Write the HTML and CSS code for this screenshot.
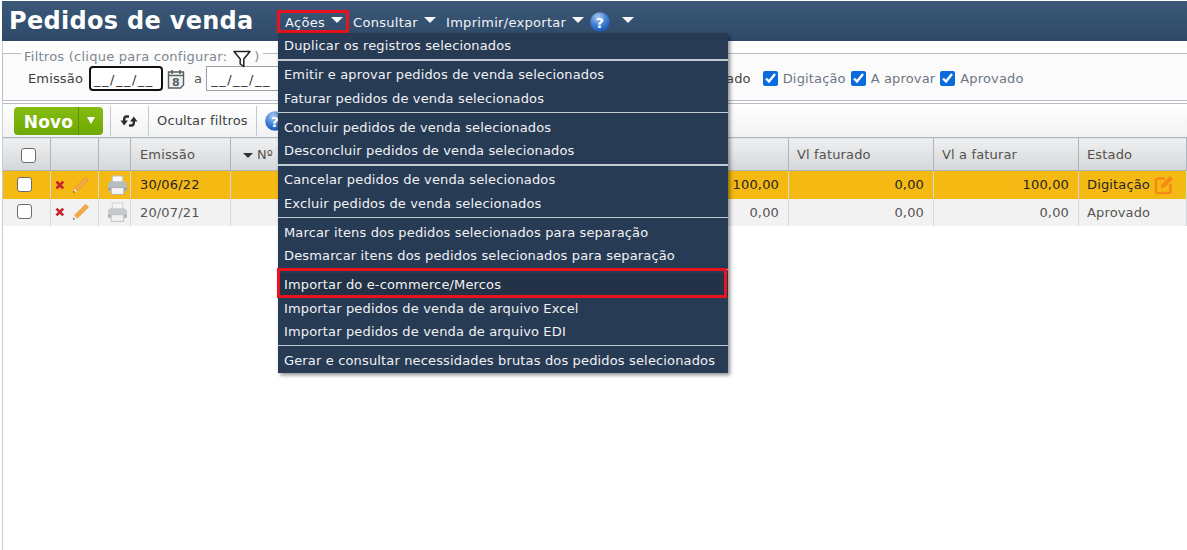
FILE: index.html
```html
<!DOCTYPE html>
<html lang="pt-BR">
<head>
<meta charset="utf-8">
<title>Pedidos de venda</title>
<link rel="stylesheet" href="styles.css">
</head>
<body>
<div class="page">
  <header class="top">
    <h1 class="title">Pedidos de venda</h1>
    <nav class="bar">
      <span class="bar-item bar-active">Ações<i class="tri"></i></span>
      <span class="bar-item bar-c">Consultar<i class="tri"></i></span>
      <span class="bar-item bar-i">Imprimir/exportar<i class="tri"></i></span>
      <svg class="help" viewBox="0 0 20 20"><defs><radialGradient id="hb" cx="40%" cy="25%" r="80%"><stop offset="0" stop-color="#a9c8ee"/><stop offset=".55" stop-color="#3f7fd4"/><stop offset="1" stop-color="#1650b0"/></radialGradient></defs><circle cx="10" cy="10" r="9.8" fill="url(#hb)"/><text x="10" y="15.500" text-anchor="middle" class="help-q">?</text></svg>
      <i class="tri tri-last"></i>
    </nav>
  </header>

  <fieldset class="filters">
    <legend class="legend">Filtros (clique para configurar:<svg class="funnel" viewBox="0 0 18 18"><path d="M1 1.500h16l-6.200 7.500v7.500L7.200 14V9z" fill="#fff" stroke="#222" stroke-width="1.500" stroke-linejoin="round"/></svg>)</legend>
    <div class="filter-row">
      <label class="lbl">Emissão</label>
      <span class="date date-focus">__/__/__</span>
      <svg class="cal" viewBox="0 0 18 20"><path d="M1.500 3h15v13l-3 3h-12z" fill="#eef0f1" stroke="#55605f" stroke-width="1.400"/><path d="M1.500 6.500h15" stroke="#55605f" stroke-width="1.400"/><path d="M5 1v4M13 1v4" stroke="#55605f" stroke-width="1.600"/><text x="9" y="16.500" text-anchor="middle" class="cal-n">8</text></svg>
      <span class="lbl lbl-a">a</span>
      <span class="date date-to">__/__/__</span>
      <div class="states">
        <span class="lbl-s">Cancelado</span>
        <label class="state"><input type="checkbox" checked>Digitação</label>
        <label class="state"><input type="checkbox" checked>A aprovar</label>
        <label class="state"><input type="checkbox" checked>Aprovado</label>
      </div>
    </div>
  </fieldset>

  <div class="toolbar">
    <div class="novo"><span class="novo-main">Novo</span><span class="novo-arrow"><i></i></span></div>
    <div class="tool tool-icon"><svg class="sync" viewBox="0 0 18 14"><path d="M9 2.500H6.500C5 2.500 4.200 3.500 4.200 5.500V7" fill="none" stroke="#2e2e2e" stroke-width="2.400"/><path d="M0.500 6.500h7.400L4.200 11.500z" fill="#2e2e2e"/><path d="M9 11.500h2.500c1.500 0 2.300-1 2.300-3V7" fill="none" stroke="#2e2e2e" stroke-width="2.400"/><path d="M10 7.500h7.500L13.800 2.500z" fill="#2e2e2e"/></svg></div>
    <div class="tool tool-text">Ocultar filtros</div>
    <div class="tool tool-help"><svg class="help" viewBox="0 0 20 20"><circle cx="10" cy="10" r="9.800" fill="url(#hb)"/><text x="10" y="15.500" text-anchor="middle" class="help-q">?</text></svg></div>
  </div>

  <table class="grid">
    <colgroup>
      <col class="c-check"><col class="c-act"><col class="c-print"><col class="c-date"><col class="c-num"><col class="c-val"><col class="c-val2"><col class="c-val2"><col>
    </colgroup>
    <thead>
      <tr>
        <th class="center"><input type="checkbox" class="cb cb-head"></th>
        <th></th>
        <th></th>
        <th class="cell-date">Emissão</th>
        <th><i class="sort"></i>Nº</th>
        <th></th>
        <th>Vl faturado</th>
        <th>Vl a faturar</th>
        <th>Estado</th>
      </tr>
    </thead>
    <tbody>
      <tr class="row-sel">
        <td class="center"><input type="checkbox" class="cb"></td>
        <td><div class="acts"><svg class="x" viewBox="0 0 10 10"><path d="M1.500 1.500l7 7M8.500 1.500l-7 7" stroke="#c4232b" stroke-width="2.800"/></svg><svg class="pen" viewBox="0 0 18 18"><path d="M14 1l3 3L5.500 15.500l-3-3z" fill="#f2a94a" stroke="#dd8c22" stroke-width=".6"/><path d="M2.500 12.500l3 3-4.500 1.500z" fill="#f7e2bf"/><path d="M1 17l.6-2 1.400 1.400z" fill="#333"/></svg></div></td>
        <td class="center"><svg class="printer" viewBox="0 0 20 19"><path d="M5 1h10v6H5z" fill="#fafafa" stroke="#c2c5c7"/><path d="M3 6h14l2 2v6a1.500 1.500 0 0 1-1.500 1.500h-15A1.500 1.500 0 0 1 1 14V8z" fill="#b9bdc0"/><path d="M1 12h18v2.500H1z" fill="#9ea3a6"/><path d="M4 12h12v6.500H4z" fill="#f5f5f5" stroke="#aaaeb1" stroke-width=".8"/></svg></td>
        <td class="cell-date">30/06/22</td>
        <td></td>
        <td class="num">100,00</td>
        <td class="num">0,00</td>
        <td class="num">100,00</td>
        <td><div class="st">Digitação<svg class="edit" viewBox="0 0 20 20"><path d="M11 3.500H4a2 2 0 0 0-2 2V16a2 2 0 0 0 2 2h10.500a2 2 0 0 0 2-2V9" fill="none" stroke="#f58a14" stroke-width="2.600"/><path d="M16 1l3 3-8.500 8.500-4 1 1-4z" fill="#f58a14"/></svg></div></td>
      </tr>
      <tr class="row-alt">
        <td class="center"><input type="checkbox" class="cb"></td>
        <td><div class="acts"><svg class="x" viewBox="0 0 10 10"><path d="M1.500 1.500l7 7M8.500 1.500l-7 7" stroke="#c4232b" stroke-width="2.800"/></svg><svg class="pen" viewBox="0 0 18 18"><path d="M14 1l3 3L5.500 15.500l-3-3z" fill="#f2a94a" stroke="#dd8c22" stroke-width=".6"/><path d="M2.500 12.500l3 3-4.500 1.500z" fill="#f7e2bf"/><path d="M1 17l.6-2 1.400 1.400z" fill="#333"/></svg></div></td>
        <td class="center"><svg class="printer" viewBox="0 0 20 19"><path d="M5 1h10v6H5z" fill="#f5f5f5" stroke="#cfd2d4"/><path d="M3 6h14l2 2v6a1.500 1.500 0 0 1-1.500 1.500h-15A1.500 1.500 0 0 1 1 14V8z" fill="#c6cacd"/><path d="M1 12h18v2.500H1z" fill="#aeb3b6"/><path d="M4 12h12v6.500H4z" fill="#f0f0f0" stroke="#b9bdc0" stroke-width=".8"/></svg></td>
        <td class="cell-date">20/07/21</td>
        <td></td>
        <td class="num">0,00</td>
        <td class="num">0,00</td>
        <td class="num">0,00</td>
        <td>Aprovado</td>
      </tr>
    </tbody>
  </table>

  <ul class="menu">
    <li>Duplicar os registros selecionados</li>
    <li class="sep sep-thick"></li>
    <li>Emitir e aprovar pedidos de venda selecionados</li>
    <li>Faturar pedidos de venda selecionados</li>
    <li class="sep"></li>
    <li>Concluir pedidos de venda selecionados</li>
    <li>Desconcluir pedidos de venda selecionados</li>
    <li class="sep sep-thick"></li>
    <li>Cancelar pedidos de venda selecionados</li>
    <li>Excluir pedidos de venda selecionados</li>
    <li class="sep"></li>
    <li>Marcar itens dos pedidos selecionados para separação</li>
    <li>Desmarcar itens dos pedidos selecionados para separação</li>
    <li class="sep"></li>
    <li class="hot">Importar do e-commerce/Mercos</li>
    <li>Importar pedidos de venda de arquivo Excel</li>
    <li>Importar pedidos de venda de arquivo EDI</li>
    <li class="sep"></li>
    <li>Gerar e consultar necessidades brutas dos pedidos selecionados</li>
  </ul>
</div>
</body>
</html>
```
FILE: styles.css
```css
* { box-sizing: border-box; }
html, body { margin: 0; padding: 0; background: #fff; }
body { font-family: "DejaVu Sans", Verdana, sans-serif; font-size: 13px; letter-spacing: .15px; color: #4a4a4a; overflow: hidden; }
.page { position: relative; width: 1187px; height: 550px; padding: 1px 0 0 2px; overflow: hidden; }
.page::before { content: ""; position: absolute; left: 2px; top: 41px; bottom: 0; width: 1px; background: #c9ced3; }

/* header */
.top { display: flex; align-items: flex-start; height: 40px; background: linear-gradient(#3b5878, #2f4a68); }
.title { margin: 5px 0 0 7px; width: 269px; font-size: 24px; line-height: 30px; font-weight: 700; letter-spacing: .3px; color: #fff; white-space: nowrap; }
.bar { display: flex; align-items: center; height: 22px; margin-top: 9px; letter-spacing: .3px; color: #f2f4f6; }
.bar-item { display: flex; align-items: center; height: 22px; padding-top: 2px; white-space: nowrap; }
.bar-active { width: 72px; height: 23px; margin-left: -1px; padding-left: 8px; outline: 3px solid #e8131f; outline-offset: -3px; }
.bar-c { margin-left: 4px; }
.bar-i { margin-left: 10px; }
.tri { display: inline-block; width: 0; height: 0; margin: -5px 0 0 6px; border-left: 6px solid transparent; border-right: 6px solid transparent; border-top: 6px solid #f4f6f8; }
.help { display: block; width: 20px; height: 20px; margin: 2px 0 0 6px; }
.help-q { font: 700 14px "DejaVu Sans", sans-serif; fill: #fff; }
.tri-last { margin-left: 12px; margin-top: -3px; }

/* filters */
.filters { position: relative; height: 55px; min-width: 0; margin: 5px 0 0; padding: 0; border: 1px solid #b8bec4; border-right: 0; background: #fbfbfb; }
.legend { position: relative; top: 4px; margin-left: 18px; padding: 0 3px; font-size: 13px; line-height: 14px; letter-spacing: .25px; color: #7d8894; white-space: nowrap; }
.funnel { width: 18px; height: 18px; margin: -4px 3px -4px 6px; vertical-align: -3px; }
.filter-row { display: flex; align-items: center; height: 25px; margin-top: 6px; padding-left: 25px; }
.lbl { color: #3f3f3f; }
.date { display: block; width: 74px; height: 25px; margin-left: 6px; padding: 5px 0 0 4px; border: 1px solid #9aa0a6; background: #fff; color: #333; letter-spacing: 1.5px; white-space: nowrap; overflow: hidden; }
.date-focus { border: 2px solid #111; border-radius: 4px; padding: 4px 0 0 3px; }
.cal { width: 18px; height: 20px; margin-left: 4px; }
.cal-n { font: 700 11px "DejaVu Sans", sans-serif; fill: #55605f; }
.lbl-a { margin-left: 9px; color: #555; }
.date-to { margin-left: 4px; }
.states { display: flex; align-items: center; margin-left: 401px; color: #6d7682; }
.lbl-s { margin-right: 12px; color: #444; }
.state { display: flex; align-items: center; margin-right: 5px; }
.state input { width: 15px; height: 15px; margin: 0 5px 0 0; accent-color: #0a6cdc; }

/* toolbar */
.toolbar { display: flex; align-items: center; height: 34px; margin-top: 2px; padding-left: 12px; border-top: 1px solid #b8bec4; background: linear-gradient(#fff, #f1f2f3); }
.novo { display: flex; width: 89px; height: 28px; border-radius: 4px; background: linear-gradient(#85bd12, #6ea800); overflow: hidden; }
.novo-main { width: 64px; padding: 1px 0 0 5px; text-align: center; font-size: 17px; line-height: 28px; font-weight: 700; color: #fff; }
.novo-arrow { display: flex; flex: 1; align-items: center; justify-content: center; border-left: 1px solid #5d8f00; }
.novo-arrow i { width: 0; height: 0; border-left: 4px solid transparent; border-right: 4px solid transparent; border-top: 7px solid #fff; }
.tool { display: flex; align-items: center; height: 30px; border-left: 1px solid #c4c9cd; }
.tool-icon { width: 38px; margin-left: 7px; padding-left: 9px; }
.sync { width: 18px; height: 14px; }
.tool-text { width: 108px; padding-left: 8px; color: #3f3f3f; white-space: nowrap; }
.tool-help .help { margin: 0 0 0 8px; }

/* grid */
.grid { table-layout: fixed; width: 1185px; border-collapse: collapse; }
.c-check { width: 48px; } .c-act { width: 48px; } .c-print { width: 32px; } .c-date { width: 100px; }
.c-num { width: 300px; } .c-val { width: 258px; } .c-val2 { width: 145px; }
.grid th, .grid td { padding: 0 9px 0 8px; border: 1px solid #adb5bc; white-space: nowrap; text-align: left; font-weight: 400; }
.grid th { height: 33px; color: #55514c; background: linear-gradient(#eff0f1, #d4d7da); }
.grid td { border-top: 0; border-bottom: 0; border-color: #d6d9dc; }
.grid .center { padding: 0; text-align: center; }
.grid .num { text-align: right; }
.grid .cell-date { padding-left: 9px; }
.row-sel td { height: 28px; background: #f5b914; color: #252525; }
.row-alt td { height: 27px; background: #f2f2f2; color: #555; }
.cb { width: 15px; height: 15px; margin: 0 0 1px -5px; vertical-align: middle; appearance: none; background: #fff; border: 1.500px solid #6d6d6d; border-radius: 3px; }
.cb-head { margin: 2px 0 0 3px; }
.sort { display: inline-block; width: 0; height: 0; margin: 0 4px 1px 4px; border-left: 5px solid transparent; border-right: 5px solid transparent; border-top: 5px solid #333; }
.acts { display: flex; align-items: center; margin-left: -4px; }
.x { width: 10px; height: 10px; }
.pen { width: 18px; height: 18px; margin-left: 7px; }
.printer { display: block; width: 21px; height: 20px; margin: 0 0 0 8px; }
.st { display: flex; align-items: center; }
.edit { width: 20px; height: 20px; margin-left: 4px; }

/* dropdown */
.menu { position: absolute; left: 278px; top: 33px; width: 450px; height: 340px; margin: 0; padding: 1px 0 0; list-style: none; background: #283b54; color: #f0f2f4; box-shadow: 2px 2px 4px rgba(0,0,0,.45); }
.menu li { height: 23.500px; padding-left: 6px; line-height: 24px; white-space: nowrap; }
.menu .sep { position: relative; height: 5.500px; padding: 0; }
.menu .sep::after { content: ""; position: absolute; left: 0; right: 0; top: 1.500px; height: 1px; background: #c2cad2; }
.menu .sep-thick::after { height: 2px; }
.menu .hot { position: relative; background: #233246; }
.menu .hot::after { content: ""; position: absolute; left: -1px; right: 1px; top: -5px; bottom: -1px; border: 3px solid #e8131f; }
```
